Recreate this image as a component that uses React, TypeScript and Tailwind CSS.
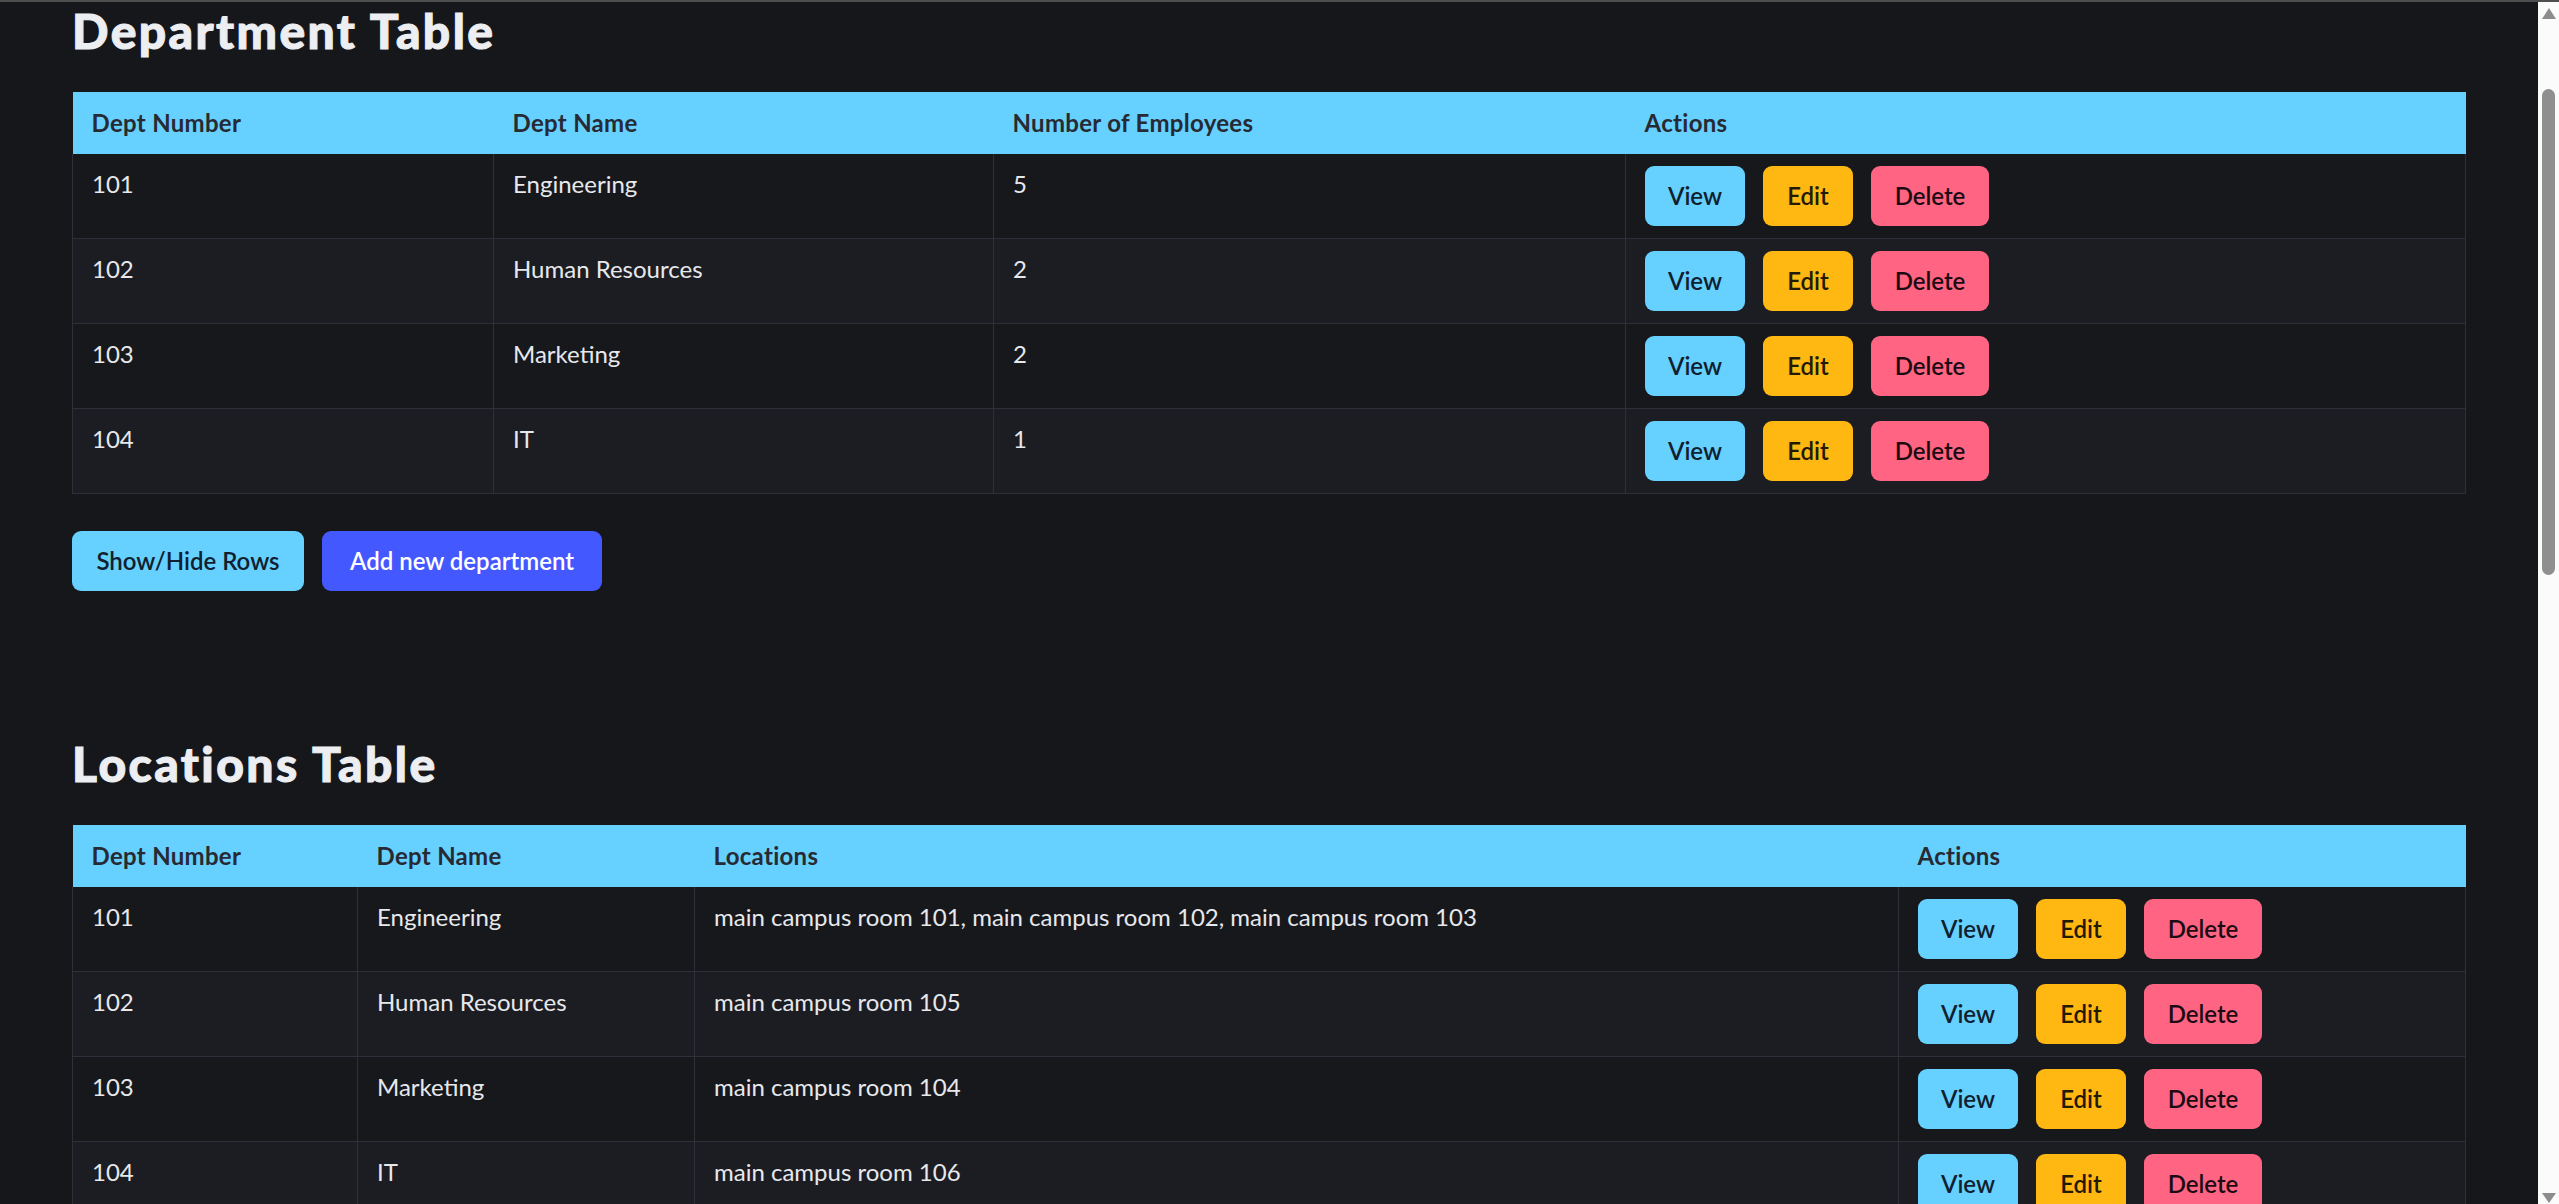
import React from "react";

const departments = [
  { num: 101, name: "Engineering", count: 5 },
  { num: 102, name: "Human Resources", count: 2 },
  { num: 103, name: "Marketing", count: 2 },
  { num: 104, name: "IT", count: 1 },
];

const locations = [
  {
    num: 101,
    name: "Engineering",
    rooms: "main campus room 101, main campus room 102, main campus room 103",
  },
  { num: 102, name: "Human Resources", rooms: "main campus room 105" },
  { num: 103, name: "Marketing", rooms: "main campus room 104" },
  { num: 104, name: "IT", rooms: "main campus room 106" },
];

function RowActions() {
  return (
    <div className="flex gap-[18px]">
      <button className="w-[100px] h-[60px] rounded-[9px] bg-[#66d0ff] text-[#10202e] font-semibold">
        View
      </button>
      <button className="w-[90px] h-[60px] rounded-[9px] bg-[#ffb711] text-[#231a05] font-semibold">
        Edit
      </button>
      <button className="w-[118px] h-[60px] rounded-[9px] bg-[#ff6583] text-[#1c0b12] font-semibold">
        Delete
      </button>
    </div>
  );
}

function Th({ children, w }: { children: React.ReactNode; w?: string }) {
  return (
    <th
      className={`${w ?? ""} px-[19px] py-[13px] text-left font-bold text-[#272a33] leading-[36px] tracking-[0.3px]`}
    >
      {children}
    </th>
  );
}

function Td({ children }: { children: React.ReactNode }) {
  return (
    <td className="align-top px-[19px] py-[12px] border-x border-b border-[#2e3039] leading-[36px]">
      {children}
    </td>
  );
}

function Heading({ children }: { children: React.ReactNode }) {
  return (
    <h2 className="text-[48px] leading-[58px] font-black tracking-[2.4px] text-[#eceef2] [-webkit-text-stroke:1px_#eceef2] mb-[32px]">
      {children}
    </h2>
  );
}

function Scrollbar() {
  return (
    <div className="w-[21px] bg-[#fbfbfb] flex flex-col items-center">
      <svg width="14" height="11" viewBox="0 0 14 11" className="mt-[6px]">
        <polygon points="7,0 14,11 0,11" fill="#8c8c8c" />
      </svg>
      <div className="mt-[70px] w-[13px] h-[486px] rounded-full bg-[#8f8f8f]" />
      <div className="flex-1" />
      <svg width="14" height="10" viewBox="0 0 14 10" className="mb-[1px]">
        <polygon points="0,0 14,0 7,10" fill="#8c8c8c" />
      </svg>
    </div>
  );
}

export default function App() {
  return (
    <div className="h-[1204px] w-full flex flex-col overflow-hidden bg-[#16171b] font-['Segoe_UI','Lato',sans-serif] text-[24px] text-[#e7e8ec]">
      <div className="h-[2px] bg-[#4e4e4e]" />
      <div className="flex flex-1 min-h-0">
        <main className="flex-1 px-[72px] overflow-hidden">
          <Heading>Department Table</Heading>
          <table className="w-full table-fixed">
            <thead>
              <tr className="bg-[#66d0ff]">
                <Th w="w-[421px]">Dept Number</Th>
                <Th w="w-[500px]">Dept Name</Th>
                <Th w="w-[632px]">Number of Employees</Th>
                <Th>Actions</Th>
              </tr>
            </thead>
            <tbody>
              {departments.map((d, i) => (
                <tr key={d.num} className={i % 2 ? "bg-[#1b1d22]" : "bg-[#17181c]"}>
                  <Td>{d.num}</Td>
                  <Td>{d.name}</Td>
                  <Td>{d.count}</Td>
                  <Td>
                    <RowActions />
                  </Td>
                </tr>
              ))}
            </tbody>
          </table>

          <div className="flex gap-[18px] mt-[37px]">
            <button className="w-[232px] h-[60px] rounded-[9px] bg-[#66d0ff] text-[#10202e] font-semibold">
              Show/Hide Rows
            </button>
            <button className="w-[280px] h-[60px] rounded-[9px] bg-[#4458ff] text-white font-semibold">
              Add new department
            </button>
          </div>

          <div className="mt-[144px]">
            <Heading>Locations Table</Heading>
          </div>
          <table className="w-full table-fixed">
            <thead>
              <tr className="bg-[#66d0ff]">
                <Th w="w-[285px]">Dept Number</Th>
                <Th w="w-[337px]">Dept Name</Th>
                <Th w="w-[1204px]">Locations</Th>
                <Th>Actions</Th>
              </tr>
            </thead>
            <tbody>
              {locations.map((l, i) => (
                <tr key={l.num} className={i % 2 ? "bg-[#1b1d22]" : "bg-[#17181c]"}>
                  <Td>{l.num}</Td>
                  <Td>{l.name}</Td>
                  <Td>{l.rooms}</Td>
                  <Td>
                    <RowActions />
                  </Td>
                </tr>
              ))}
            </tbody>
          </table>
        </main>
        <Scrollbar />
      </div>
    </div>
  );
}
